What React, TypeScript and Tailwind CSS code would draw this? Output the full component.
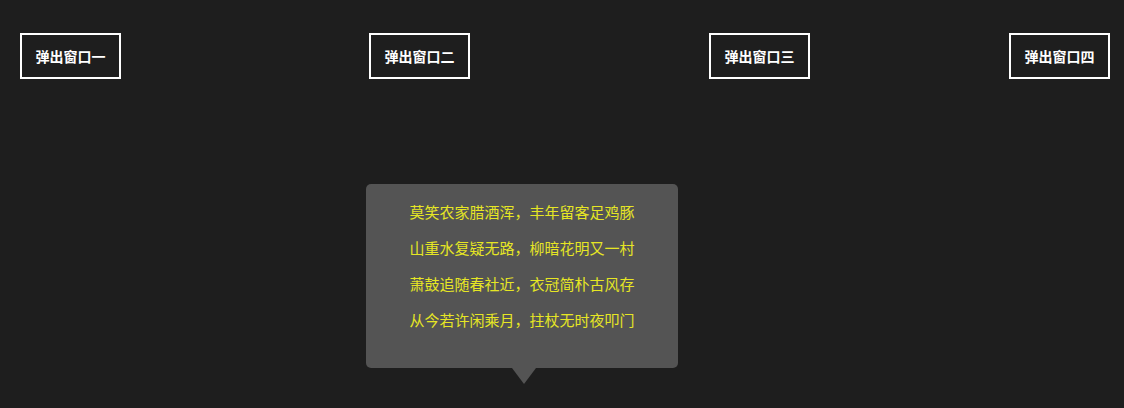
import { useState } from "react";
import clsx from "clsx";

const poem = [
  "莫笑农家腊酒浑，丰年留客足鸡豚",
  "山重水复疑无路，柳暗花明又一村",
  "萧鼓追随春社近，衣冠简朴古风存",
  "从今若许闲乘月，拄杖无时夜叩门",
];

const buttons = [
  { label: "弹出窗口一", gap: "ml-[20px]" },
  { label: "弹出窗口二", gap: "ml-[248px]" },
  { label: "弹出窗口三", gap: "ml-[239px]" },
  { label: "弹出窗口四", gap: "ml-[199px]" },
];

function Popup() {
  return (
    <div className="absolute left-[-3px] top-[151px] w-[312px]">
      <div className="rounded-[5px] bg-[#545454] pt-[10px] pb-[30px] text-center">
        {poem.map((line) => (
          <p
            key={line}
            className="text-[15px] leading-[36px] text-[#e6e624]"
          >
            {line}
          </p>
        ))}
      </div>
      <div className="ml-[146px] h-[16px] w-[24px] bg-[#545454] [clip-path:polygon(0_0,100%_0,50%_100%)]" />
    </div>
  );
}

export default function App() {
  const [open] = useState(1);

  return (
    <div
      className="h-[408px] w-full bg-[#1e1e1e] pt-[33px]"
      style={{ fontFamily: '"Noto Sans CJK SC", "Noto Sans", sans-serif' }}
    >
      <div className="flex">
        {buttons.map((btn, i) => (
          <div key={btn.label} className={clsx("relative", btn.gap)}>
            <button
              type="button"
              className="flex h-[46px] w-[101px] items-center justify-center border-2 border-white text-[14px] font-bold text-white"
            >
              {btn.label}
            </button>
            {open === i && <Popup />}
          </div>
        ))}
      </div>
    </div>
  );
}
